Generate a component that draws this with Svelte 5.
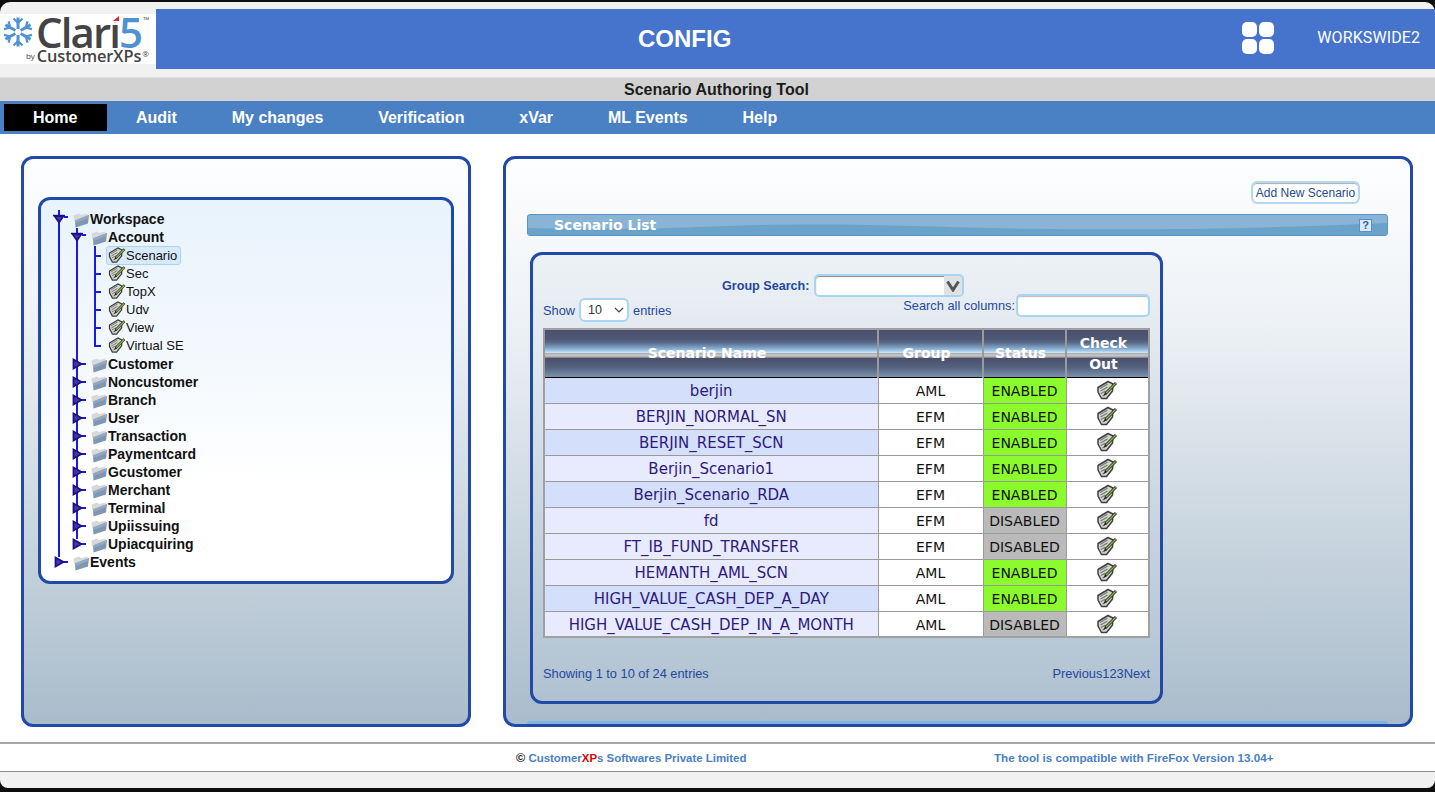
<script>
  const nav = ['Audit', 'My changes', 'Verification', 'xVar', 'ML Events', 'Help'];
  const l1 = ['Customer','Noncustomer','Branch','User','Transaction','Paymentcard','Gcustomer','Merchant','Terminal','Upiissuing','Upiacquiring'];
  const leaves = ['Scenario','Sec','TopX','Udv','View','Virtual SE'];
  const tree = [
    { label: 'Workspace', level: 0, kind: 'open', guides: [0] },
    { label: 'Account', level: 1, kind: 'open', guides: [0, 1] },
    ...leaves.map((label, i) => ({ label, level: 2, kind: 'leaf', guides: [0, 1], last: i === 5, selected: i === 0 })),
    ...l1.map((label, i) => ({ label, level: 1, kind: 'closed', guides: i === 10 ? [0] : [0, 1], end: i === 10 })),
    { label: 'Events', level: 0, kind: 'closed', guides: [], end: true }
  ];
  const rows = [
    ['berjin','AML',true],['BERJIN_NORMAL_SN','EFM',true],['BERJIN_RESET_SCN','EFM',true],
    ['Berjin_Scenario1','EFM',true],['Berjin_Scenario_RDA','EFM',true],['fd','EFM',false],
    ['FT_IB_FUND_TRANSFER','EFM',false],['HEMANTH_AML_SCN','AML',true],
    ['HIGH_VALUE_CASH_DEP_A_DAY','AML',true],['HIGH_VALUE_CASH_DEP_IN_A_MONTH','AML',false]
  ];
  const arms = [0, 60, 120, 180, 240, 300];
  const line = '#1a1ae0';
</script>

{#snippet pencil()}
  <svg class="pencil" viewBox="0 0 24 24" width="24" height="24" aria-hidden="true">
    <path d="M3 9.5 L13 3.5 L18 6 L17.5 13 L11.5 20.5 L6.5 20.5 L3 14 Z" fill="#d2d2ce" stroke="#3f3f3f" stroke-width="1.5" stroke-linejoin="round"/>
    <path d="M5 10.5 L12.5 6 M5.5 13 L12.5 9 M6 15.5 L10.5 13 M7.5 18 L9.5 16.8" stroke="#7c7c78" stroke-width="1.2"/>
    <path d="M10.5 15.5 L21 5" stroke="#333" stroke-width="3"/>
    <path d="M11 15 L20.6 5.4" stroke="#86bd3c" stroke-width="1.3"/>
    <path d="M8.5 18 L10 14.2 L12 16.2 Z" fill="#222"/>
  </svg>
{/snippet}

{#snippet folder()}
  <svg class="folder" viewBox="0 0 18 16" width="18" height="16" aria-hidden="true">
    <path d="M1.5 3.5 L7 1.5 L9 3 L15.5 1.5 L15.5 5 L3 10 L2 8 Z" fill="#d6d8da"/>
    <path d="M3 8.5 L17 3 L16 11.5 L3.5 15.5 Z" fill="#7f97b3"/>
    <path d="M3 8.5 L17 3 L16.6 6 L3.2 11 Z" fill="#94a9c1"/>
  </svg>
{/snippet}

<div class="window">
  <header class="top">
    <div class="brand">
      <div class="logo">
        <svg class="flake" viewBox="-16 -16 32 32" width="32" height="32" aria-hidden="true">
          {#each arms as a}
            <g transform="rotate({a})" stroke="#4f92d2" fill="none">
              <path d="M0 -3 V-14.5" stroke-width="3"/>
              <path d="M-4.5 -13.5 L0 -9 L4.5 -13.5" stroke-width="2.2"/>
            </g>
          {/each}
        </svg>
        <div class="wordmark">
          <div class="clari">Clari<span>5</span><sup>™</sup></div>
          <div class="by"><small>by</small>CustomerXPs<sup>®</sup></div>
        </div>
        <svg class="tick" viewBox="0 0 8 7" width="8" height="7" aria-hidden="true"><rect width="8" height="7" fill="#fff"/><path d="M1 6 L7 1 V6 Z" fill="#d8202a"/></svg>
      </div>
    </div>
    <div class="blue">
      <h1>CONFIG</h1>
      <div class="apps" aria-hidden="true"><i></i><i></i><i></i><i></i></div>
      <div class="user">WORKSWIDE2</div>
    </div>
  </header>

  <div class="tool">Scenario Authoring Tool</div>

  <nav class="nav">
    <a class="home" href="#home">Home</a>
    <div class="links">
      {#each nav as n}<a href="#{n}">{n}</a>{/each}
    </div>
  </nav>

  <main class="main">
    <section class="panel left">
      <div class="tree">
        {#each tree as t}
          <div class="node" class:branch={t.kind !== 'leaf'} class:closed={t.kind === 'closed'}>
            <svg class="guide" width={22 + 18 * t.level} height="18" aria-hidden="true">
              {#each t.guides as g}
                {#if g < t.level}
                  <rect x={8 + 18 * g} y="0" width="2" height="18" fill={line}/>
                {/if}
              {/each}
              {#if t.end && t.level === 1}
                <rect x="8" y="0" width="2" height="18" fill={line}/>
              {/if}
              {#if t.kind === 'open'}
                <rect x={8 + 18 * t.level} y="0" width="2" height="18" fill={line}/>
                <path d="M{3 + 18 * t.level} 5.5 H{15 + 18 * t.level}" stroke={line} stroke-width="1.5"/>
                <path d="M{4.5 + 18 * t.level} 6 H{13.5 + 18 * t.level} L{9 + 18 * t.level} 12.5 Z" fill="#3f3ab0" stroke="#22107f" stroke-width="1.8"/>
                <rect x={14 + 18 * t.level} y="6" width="4" height="2" fill={line}/>
              {:else if t.kind === 'closed'}
                <rect x={8 + 18 * t.level} y="0" width="2" height={t.end ? 5 : 18} fill={line}/>
                <rect x={13 + 18 * t.level} y="9" width="5" height="2" fill={line}/>
                <path d="M{5.5 + 18 * t.level} 5.5 L{13.5 + 18 * t.level} 10 L{5.5 + 18 * t.level} 14.5 Z" fill="#3f3ab0" stroke="#22107f" stroke-width="1.8"/>
              {:else}
                <rect x="44" y="0" width="2" height={t.last ? 11 : 18} fill={line}/>
                <rect x="44" y="9" width="7" height="2" fill={line}/>
              {/if}
            </svg>
            {#if t.kind === 'leaf'}
              <span class="leaf" class:selected={t.selected}>{@render pencil()}<span>{t.label}</span></span>
            {:else}
              {@render folder()}<span>{t.label}</span>
            {/if}
          </div>
        {/each}
      </div>
    </section>

    <section class="panel right">
      <div class="addrow"><button class="add">Add New Scenario</button></div>
      <div class="bar">
        <svg class="wave" viewBox="0 0 860 20" preserveAspectRatio="none" aria-hidden="true">
          <path d="M0 13 C40 14 80 14 120 13.5 C180 12 220 9 300 9.5 C380 10 430 13 520 14 C640 15 720 14 860 8 V20 H0 Z" fill="#6aa2c9"/>
        </svg>
        <span class="title">Scenario List</span>
        <b class="help">?</b>
      </div>

      <div class="inner">
        <div class="group">
          <label for="gs">Group Search:</label>
          <div class="combo">
            <input id="gs" />
            <span class="drop">
              <svg viewBox="0 0 14 12" width="14" height="12" aria-hidden="true"><path d="M1.5 1.5 L7 10 L12.5 1.5" fill="none" stroke="#555" stroke-width="3"/></svg>
            </span>
          </div>
        </div>
        <div class="filters">
          <div class="show">
            Show
            <span class="sel">
              <select><option>10</option></select>
              <svg viewBox="0 0 10 6" width="10" height="6" aria-hidden="true"><path d="M1 1 L5 5 L9 1" fill="none" stroke="#445" stroke-width="1.2"/></svg>
            </span>
            entries
          </div>
          <div class="search"><label for="sa">Search all columns:</label><input id="sa" /></div>
        </div>

        <table>
          <thead>
            <tr>
              <th class="c1">Scenario Name</th>
              <th class="c2">Group</th>
              <th class="c3">Status</th>
              <th class="c4">Check<br />Out</th>
            </tr>
          </thead>
          <tbody>
            {#each rows as r, i}
              <tr>
                <td class="name" class:odd={[0,2,4,8].includes(i)}>{r[0]}</td>
                <td>{r[1]}</td>
                <td class={r[2] ? 'on' : 'off'}>{r[2] ? 'ENABLED' : 'DISABLED'}</td>
                <td class="chk">{@render pencil()}</td>
              </tr>
            {/each}
          </tbody>
        </table>

        <div class="foot">
          <span>Showing 1 to 10 of 24 entries</span>
          <span>Previous123Next</span>
        </div>
      </div>

      <div class="bar2"></div>
    </section>
  </main>

  <footer class="footer">
    <div class="copy"><span class="c">©</span> <b>Customer<em>XP</em>s Softwares Private Limited</b></div>
    <div class="compat">The tool is compatible with FireFox Version 13.04+</div>
  </footer>
</div>

<style>
  :global(body) { margin: 0; background: #0e0e0e; }
  .window {
    box-sizing: border-box; width: 1435px; height: 786px; margin-top: 2px;
    background: #f1f1f1; border-radius: 10px 10px 8px 8px; overflow: hidden;
    padding-top: 7px; font-family: "Liberation Sans", Arial, sans-serif;
  }
  .top { display: flex; height: 60px; }
  .brand { width: 156px; flex: none; padding-top: 5px; box-sizing: border-box; }
  .logo { position: relative; display: flex; background: #fff; height: 50px; width: 156px; padding-left: 2px; box-sizing: border-box; }
  .flake { margin-top: 2px; flex: none; }
  .wordmark { margin-left: 2px; padding-top: 1px; }
  .clari { font: 600 42px/33px "Open Sans", sans-serif; color: #444; letter-spacing: -1.9px; height: 33px; white-space: nowrap; }
  .clari span { color: #4f92d2; }
  .clari sup { font-size: 8px; line-height: 0; vertical-align: 25px; letter-spacing: 0; color: #555; margin-left: 2px; }
  .by { font: 600 16.4px/16px "Open Sans", sans-serif; color: #444; white-space: nowrap; margin-left: -10px; letter-spacing: -.1px; }
  .by small { font-size: 8px; font-weight: 400; margin-right: 2px; vertical-align: 3px; }
  .by sup { font-size: 8px; font-weight: 400; line-height: 0; vertical-align: 5px; margin-left: 1px; }
  .tick { position: absolute; left: 112px; top: 1px; }
  .blue {
    flex: 1; background: #4674cd; color: #fff; display: flex; align-items: center;
  }
  h1 { margin: 0 0 0 482px; font: 700 24px "Liberation Sans", sans-serif; }
  .apps { display: grid; grid-template-columns: 15px 15px; gap: 2px; margin-left: 511px; margin-top: -2px; }
  .apps i { height: 15px; background: #fff; border-radius: 5px; }
  .user { margin-left: 43px; font: 400 16px "Roboto", sans-serif; letter-spacing: .1px; margin-top: -4px; }
  .tool {
    margin-top: 8px; height: 24px; box-sizing: border-box; background: #d2d2d2; border-top: 1px solid #e0e0e0; padding-right: 2px;
    text-align: center; font-weight: 700; font-size: 16px; line-height: 24px; color: #1c1c1c;
  }
  .nav {
    display: flex; align-items: center; height: 33px; background: #4a80c4; padding-left: 4px;
    font-weight: 700; font-size: 16px;
  }
  .nav a { color: #fff; text-decoration: none; }
  .nav .home { background: #000; width: 103px; height: 27px; line-height: 27px; padding-left: 29px; box-sizing: border-box; }
  .links { display: flex; gap: 54.85px; margin-left: 29px; }
  .main {
    background: #fff; height: 608px; box-sizing: border-box; padding: 22px 22px 15px 21px;
    display: flex; gap: 32px;
  }
  .panel {
    box-sizing: border-box; height: 571px; border: 3px solid #2149a8; border-radius: 12px;
    background: linear-gradient(180deg, #fdfeff 0%, #eef2f6 28%, #a9bccb 100%); overflow: hidden;
  }
  .left { width: 450px; padding: 38px 14px 0; }
  .right { width: 910px; padding-top: 22px; }
  .tree {
    box-sizing: border-box; height: 387px; border: 3px solid #2149a8; border-radius: 12px; padding: 10px 0 0 9px;
    background: linear-gradient(180deg, #e8f3fc 0%, #f4f9fd 45%, #fff 75%);
  }
  .node { display: flex; align-items: center; height: 18px; font-size: 13px; color: #111; }
  .node.branch { font-weight: 700; font-size: 14px; }
  .node.closed > span { padding-top: 2px; }
  .guide { flex: none; }
  .folder { flex: none; margin-top: 1px; }
  .node.closed .folder { margin-top: 3px; }
  .leaf { display: flex; align-items: center; margin-left: -2px; height: 17px; padding-right: 3px; border: 1px solid transparent; border-radius: 3px; }
  .leaf.selected { background: #d7eafb; border-color: #a9d3f3; }
  .pencil { flex: none; }
  .leaf .pencil { width: 20px; height: 20px; margin-right: -1px; }
  .addrow { display: flex; justify-content: flex-end; padding-right: 50px; }
  .add {
    width: 109px; height: 23px; padding: 0; background: #fff; border: 2px solid #b4d8f2; border-radius: 6px;
    box-shadow: inset 0 1px 1px #aaa; font: 12px "Liberation Sans", sans-serif; color: #264b8e;
  }
  .bar {
    position: relative; display: flex; align-items: center; justify-content: space-between; height: 22px; box-sizing: border-box;
    margin: 10px 22px 0 21px; padding: 0 15px 0 26px; border: 1px solid #5a93c6; border-radius: 3px; overflow: hidden;
    background: #89b4d5; color: #fff; font: 700 14px "DejaVu Sans", sans-serif;
  }
  .wave { position: absolute; left: 0; top: 0; width: 100%; height: 100%; }
  .title, .help { position: relative; }
  .help {
    width: 13px; height: 13px; background: #dbe8f6; border: 1px solid #5f8fc6; box-sizing: border-box;
    color: #2d5fae; font: 700 11px/11px "Liberation Sans", sans-serif; text-align: center;
  }
  .inner {
    box-sizing: border-box; width: 633px; height: 452px; margin: 16px 0 0 24px; padding: 19px 9px 0 10px;
    border: 3px solid #2149a8; border-radius: 12px; color: #24489f; font-size: 12.8px;
    background: linear-gradient(180deg, rgba(236,241,245,.9), rgba(176,194,209,.9));
  }
  .group { display: flex; align-items: center; gap: 5px; margin-left: 179px; height: 23px; font-weight: 700; font-size: 12.6px; }
  .combo { display: flex; width: 150px; height: 23px; box-sizing: border-box; border: 2px solid #a8d6f2; border-radius: 5px; background: #fff; box-shadow: inset 0 1px 1px #888; overflow: hidden; }
  .combo input { border: 0; background: none; width: 128px; outline: 0; padding: 0; }
  .drop { flex: 1; display: flex; align-items: center; justify-content: center; background: #dfe3e6; }
  .filters { display: flex; justify-content: space-between; align-items: flex-start; margin-top: -2px; height: 33px; padding-right: 1px; }
  .show { display: flex; align-items: center; gap: 4px; margin-top: 3px; }
  .sel { position: relative; display: inline-flex; align-items: center; }
  .sel select {
    appearance: none; width: 50px; height: 24px; box-sizing: border-box; padding: 0 0 0 7px; border: 2px solid #a8d6f2; border-radius: 6px;
    background: #fff; color: #333; font: 12.5px "Liberation Sans", sans-serif;
  }
  .sel svg { position: absolute; right: 5px; top: 9px; pointer-events: none; }
  .search { display: flex; align-items: center; gap: 1px; margin-top: -1px; }
  .search input {
    box-sizing: border-box; width: 134px; height: 23px; padding: 0; border: 2px solid #a8d6f2; border-radius: 5px;
    background: #fff; box-shadow: inset 0 1px 1px #bbb; outline: 0;
  }
  table {
    width: 607px; border-collapse: collapse; table-layout: fixed; background: #fff;
    font: 14px "DejaVu Sans", sans-serif; color: #111; border: 2px solid #a0a0a0;
  }
  th {
    height: 48px; padding: 1px 8px 0 0; box-sizing: border-box; color: #fff; font-weight: 700; font-size: 14px; line-height: 21px;
    border-right: 2px solid #9a9a9a; border-left: 2px solid #9a9a9a; border-bottom: 1px solid #000;
    background: linear-gradient(180deg, #4a5070 0%, #4e5874 20%, #5a6a8a 27%, #7fa3c8 38%, #a8cfec 45%, #c8e2f4 48%, #b0b0b0 50%, #c8c8c8 54%, #a0a0a0 58%, #4a4f6c 60%, #55637f 80%, #7a92ae 100%);
  }
  .c1 { width: 334px; }
  .c2 { width: 105px; }
  .c3 { width: 83px; }
  td { height: 26px; padding: 2px 0 0; box-sizing: border-box; text-align: center; border: 1px solid #9a9a9a; }
  td.name { background: #e8ebfd; color: #2e1a7c; font-size: 15px; }
  td.name.odd { background: #d3dffb; }
  td.on { background: #8cfb2e; }
  td.off { background: #bababa; }
  td.chk { line-height: 0; padding: 0; }
  td.chk .pencil { vertical-align: middle; }
  .foot { display: flex; justify-content: space-between; margin-top: 28px; padding-right: 1px; }
  .bar2 {
    height: 20px; margin: 17px 22px 0 21px; background: #8ab5d6; border-top: 2px solid #7ab3e6; border-radius: 3px; box-sizing: border-box;
  }
  .footer {
    height: 30px; box-sizing: border-box; background: #fff; border-top: 2px solid #a8a8a8; border-bottom: 1px solid #8a8a8a;
    display: flex; align-items: center; font-weight: 700; color: #4a80c4;
    padding: 0 0 0 516px;
  }
  .copy { color: #111; font-weight: 400; width: 478px; font-size: 11.45px; flex: none; padding-top: 2px; }
  .copy .c { font-size: 12.5px; line-height: 1; font-weight: 700; }
  .copy b { color: #4a80c4; }
  .copy em { color: #e00000; font-style: normal; }
  .compat { font-size: 11.67px; }
</style>
